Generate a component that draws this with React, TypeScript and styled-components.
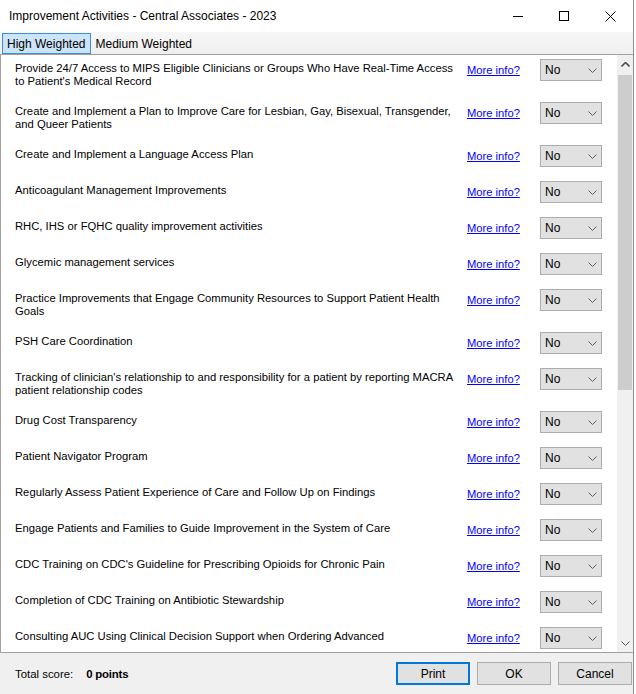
import React from "react";
import styled, { createGlobalStyle } from "styled-components";

const GlobalStyle = createGlobalStyle`
	html, body {
		margin: 0;
		padding: 0;
		background: #ffffff;
		overflow: hidden;
	}
	* {
		box-sizing: border-box;
	}
`;

const activities = [
	"Provide 24/7 Access to MIPS Eligible Clinicians or Groups Who Have Real-Time Access\nto Patient's Medical Record",
	"Create and Implement a Plan to Improve Care for Lesbian, Gay, Bisexual, Transgender,\nand Queer Patients",
	"Create and Implement a Language Access Plan",
	"Anticoagulant Management Improvements",
	"RHC, IHS or FQHC quality improvement activities",
	"Glycemic management services",
	"Practice Improvements that Engage Community Resources to Support Patient Health\nGoals",
	"PSH Care Coordination",
	"Tracking of clinician's relationship to and responsibility for a patient by reporting MACRA\npatient relationship codes",
	"Drug Cost Transparency",
	"Patient Navigator Program",
	"Regularly Assess Patient Experience of Care and Follow Up on Findings",
	"Engage Patients and Families to Guide Improvement in the System of Care",
	"CDC Training on CDC's Guideline for Prescribing Opioids for Chronic Pain",
	"Completion of CDC Training on Antibiotic Stewardship",
	"Consulting AUC Using Clinical Decision Support when Ordering Advanced",
];

const Window = styled.div`
	width: 634px;
	height: 694px;
	display: flex;
	flex-direction: column;
	background: #ffffff;
	border-right: 1px solid #8f8f8f;
	font-family: "Liberation Sans", Arial, sans-serif;
	color: #000000;
`;

const TitleBar = styled.div`
	height: 32px;
	display: flex;
	align-items: center;
	background: #ffffff;
`;

const Title = styled.div`
	flex: 1;
	padding-left: 9px;
	font-size: 12px;
`;

const CaptionButton = styled.div`
	width: 46px;
	height: 32px;
	display: flex;
	align-items: center;
	justify-content: center;
`;

const TabStrip = styled.div`
	height: 22px;
	display: flex;
	align-items: stretch;
	padding-left: 2px;
	background: linear-gradient(#f7f7f7, #efefef);
`;

const Tab = styled.div<{ $active?: boolean }>`
	display: flex;
	align-items: center;
	padding: 0 4px 0 4px;
	font-size: 12px;
	background: ${(p) => (p.$active ? "#cce4f7" : "transparent")};
	border: 1px solid ${(p) => (p.$active ? "#3d8ee0" : "transparent")};
	margin-top: 1px;
`;

const Panel = styled.div`
	flex: 1;
	display: flex;
	min-height: 0;
	border-top: 1px solid #a0a0a0;
	border-left: 1px solid #a0a0a0;
	border-bottom: 1px solid #a0a0a0;
`;

const List = styled.div`
	flex: 1;
	overflow: hidden;
	padding-left: 14px;
`;

const Row = styled.div`
	display: grid;
	grid-template-columns: 452px 73px 62px;
	align-items: start;
	padding: 4px 0 10px 0;
`;

const Label = styled.div`
	font-size: 11.25px;
	line-height: 13px;
	padding: 3px 0 0 0;
	white-space: pre-line;
`;

const MoreInfo = styled.a`
	font-size: 11.2px;
	line-height: 22px;
	color: #0000ff;
	text-decoration: underline;
	cursor: pointer;
`;

const Combo = styled.div`
	height: 22px;
	display: flex;
	align-items: center;
	justify-content: space-between;
	padding: 0 4px 0 4px;
	background: #e1e1e1;
	border: 1px solid #adadad;
	font-size: 12px;
`;

const ScrollBar = styled.div`
	width: 16px;
	display: flex;
	flex-direction: column;
	background: #f0f0f0;
`;

const ScrollArrow = styled.div`
	height: 18px;
	display: flex;
	align-items: center;
	justify-content: center;
`;

const Thumb = styled.div`
	height: 315px;
	margin: 2px 1px 0 1px;
	background: #cdcdcd;
`;

const Track = styled.div`
	flex: 1;
`;

const Footer = styled.div`
	height: 41px;
	display: flex;
	align-items: center;
	padding: 0 1px 0 15px;
	background: #f0f0f0;
`;

const Score = styled.div`
	flex: 1;
	font-size: 11.4px;
	display: flex;
	gap: 13px;
	b {
		font-weight: bold;
		letter-spacing: -0.2px;
	}
`;

const Button = styled.div<{ $default?: boolean }>`
	width: 74px;
	height: 23px;
	margin-left: 7px;
	display: flex;
	align-items: center;
	justify-content: center;
	font-size: 12px;
	background: #e1e1e1;
	border: ${(p) => (p.$default ? "2px solid #0078d7" : "1px solid #adadad")};
`;

function Chevron({ up, color = "#606060" }: { up?: boolean; color?: string }) {
	return (
		<svg width="9" height="5" viewBox="0 0 9 5">
			<path
				d={up ? "M0.5 4.5 L4.5 0.5 L8.5 4.5" : "M0.5 0.5 L4.5 4.5 L8.5 0.5"}
				fill="none"
				stroke={color}
				strokeWidth={up ? 1.6 : 1}
			/>
		</svg>
	);
}

function WindowButtons() {
	return (
		<>
			<CaptionButton>
				<svg width="10" height="10" viewBox="0 0 10 10">
					<path d="M0 5.5 H10" stroke="#000" strokeWidth="1" />
				</svg>
			</CaptionButton>
			<CaptionButton>
				<svg width="10" height="10" viewBox="0 0 10 10">
					<rect x="0.5" y="0.5" width="9" height="9" fill="none" stroke="#000" strokeWidth="1" />
				</svg>
			</CaptionButton>
			<CaptionButton>
				<svg width="11" height="11" viewBox="0 0 11 11">
					<path d="M0.5 0.5 L10.5 10.5 M10.5 0.5 L0.5 10.5" stroke="#000" strokeWidth="1" />
				</svg>
			</CaptionButton>
		</>
	);
}

export default function App() {
	return (
		<>
			<GlobalStyle />
			<Window>
				<TitleBar>
					<Title>Improvement Activities - Central Associates - 2023</Title>
					<WindowButtons />
				</TitleBar>
				<TabStrip>
					<Tab $active>High Weighted</Tab>
					<Tab>Medium Weighted</Tab>
				</TabStrip>
				<Panel>
					<List>
						{activities.map((text) => (
							<Row key={text}>
								<Label>{text}</Label>
								<MoreInfo>More info?</MoreInfo>
								<Combo>
									No
									<Chevron />
								</Combo>
							</Row>
						))}
					</List>
					<ScrollBar>
						<ScrollArrow>
							<Chevron up color="#505050" />
						</ScrollArrow>
						<Thumb />
						<Track />
						<ScrollArrow>
							<Chevron color="#505050" />
						</ScrollArrow>
					</ScrollBar>
				</Panel>
				<Footer>
					<Score>
						<span>Total score:</span>
						<b>0 points</b>
					</Score>
					<Button $default>Print</Button>
					<Button>OK</Button>
					<Button>Cancel</Button>
				</Footer>
			</Window>
		</>
	);
}
